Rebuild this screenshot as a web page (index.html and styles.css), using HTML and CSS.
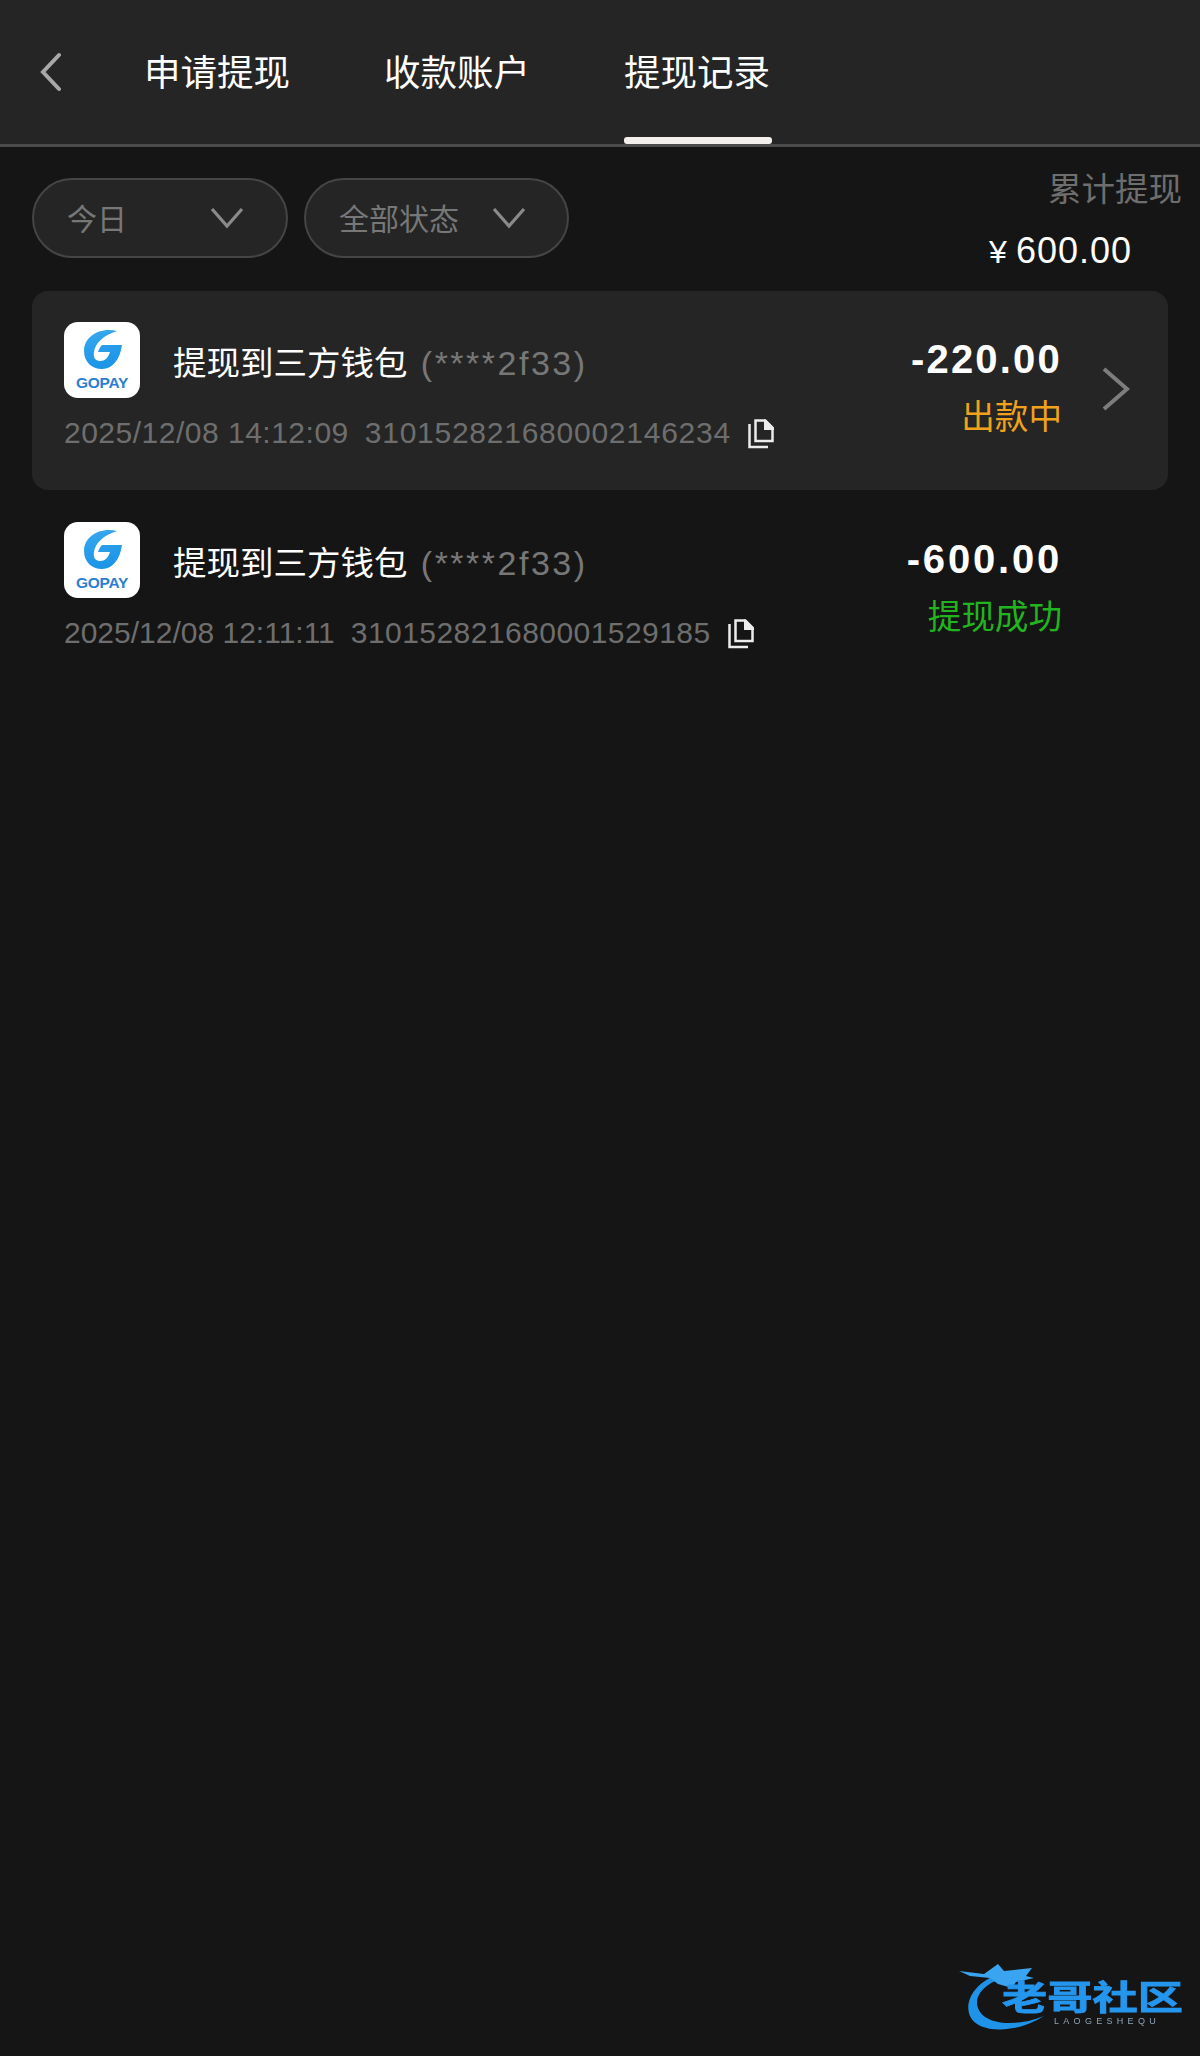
FILE: index.html
```html
<!DOCTYPE html>
<html lang="zh-CN">
<head>
<meta charset="utf-8">
<title>提现记录</title>
<link rel="stylesheet" href="styles.css">
</head>
<body>
<svg class="defs" width="0" height="0" aria-hidden="true">
  <defs>
    <linearGradient id="gopay" x1="0" y1="0" x2="0.3" y2="1">
      <stop offset="0" stop-color="#38a9ef"/>
      <stop offset="1" stop-color="#1c95e6"/>
    </linearGradient>
    <symbol id="g-mark" viewBox="0 0 76 76">
      <path fill="url(#gopay)" d="M53 9C35 5 20 15 20 29C20 40 28 47 38 47C49 47 56 37 58 23L38 23C36 25 35 27 34 30L46 30C44 36 41 39 36 39C31 39 29 35 30 30C31 21 40 13 53 9Z"/>
    </symbol>
    <symbol id="copy" viewBox="0 0 26 31">
      <path fill="none" stroke="#ececec" stroke-width="2.500" d="M7.500 2.500H17L24.500 10V23H7.500Z"/>
      <path fill="#ececec" d="M16 1.500H18L26 9.500V12H16Z"/>
      <path fill="none" stroke="#ececec" stroke-width="2.500" d="M1.500 6V29H20"/>
    </symbol>
  </defs>
</svg>
<main class="page">
  <header class="topbar">
    <button class="back" aria-label="返回">
      <svg width="22" height="40" viewBox="0 0 22 40"><path d="M20 3L4 20L20 37" fill="none" stroke="#a8a8a8" stroke-width="4" stroke-linecap="round"/></svg>
    </button>
    <nav class="tabs">
      <a class="tab">申请提现</a>
      <a class="tab">收款账户</a>
      <a class="tab tab-active">提现记录</a>
    </nav>
  </header>

  <section class="filters">
    <div class="pills">
      <div class="pill pill-day">
        <span>今日</span>
        <svg width="34" height="22" viewBox="0 0 34 22"><path d="M2 2L17 19L32 2" fill="none" stroke="#8a8a8a" stroke-width="3.200"/></svg>
      </div>
      <div class="pill pill-status">
        <span>全部状态</span>
        <svg width="34" height="22" viewBox="0 0 34 22"><path d="M2 2L17 19L32 2" fill="none" stroke="#8a8a8a" stroke-width="3.200"/></svg>
      </div>
    </div>
    <div class="summary">
      <div class="summary-label">累计提现</div>
      <div class="summary-value"><span class="yen">¥</span>600.00</div>
    </div>
  </section>

  <section class="records">
    <article class="record record-active">
      <div class="record-main">
        <div class="record-head">
          <div class="logo">
            <svg class="logo-g" width="76" height="76"><use href="#g-mark"/></svg>
            <span class="logo-text">GOPAY</span>
          </div>
          <div class="record-title">提现到三方钱包 <span class="mask">(****2f33)</span></div>
        </div>
        <div class="record-meta meta-wide">
          <span class="time">2025/12/08 14:12:09</span>
          <span class="order">310152821680002146234</span>
          <svg class="copy" width="26" height="31"><use href="#copy"/></svg>
        </div>
      </div>
      <div class="record-side">
        <div class="amount">-220.00</div>
        <div class="status status-pending">出款中</div>
      </div>
      <div class="arrow-slot">
        <svg width="30" height="46" viewBox="0 0 30 46"><path d="M3 3L26 23L3 43" fill="none" stroke="#7d7d7d" stroke-width="4"/></svg>
      </div>
    </article>

    <article class="record">
      <div class="record-main">
        <div class="record-head">
          <div class="logo">
            <svg class="logo-g" width="76" height="76"><use href="#g-mark"/></svg>
            <span class="logo-text">GOPAY</span>
          </div>
          <div class="record-title">提现到三方钱包 <span class="mask">(****2f33)</span></div>
        </div>
        <div class="record-meta meta-narrow">
          <span class="time">2025/12/08 12:11:11</span>
          <span class="order">310152821680001529185</span>
          <svg class="copy" width="26" height="31"><use href="#copy"/></svg>
        </div>
      </div>
      <div class="record-side">
        <div class="amount amount-wide">-600.00</div>
        <div class="status status-success">提现成功</div>
      </div>
      <div class="arrow-slot"></div>
    </article>
  </section>

  <div class="watermark">
    <svg class="wm-dragon" width="110" height="80" viewBox="0 0 110 80">
      <path d="M40 17C18 26 8 44 14 58C22 76 60 76 88 58C64 68 34 68 24 54C16 42 24 28 46 20Z" fill="#1f93e8"/>
      <path d="M3 13L28 16L42 6L48 13L76 10L70 18L78 20L60 24L56 30L42 26L34 20L14 18Z" fill="#3aa4f0"/>
    </svg>
    <span class="wm-title">老哥社区</span>
    <span class="wm-sub">LAOGESHEQU</span>
  </div>
</main>
</body>
</html>
```

FILE: styles.css
```css
* {
  box-sizing: border-box;
}

html,
body {
  margin: 0;
  padding: 0;
  background: #151515;
}

body {
  font-family: "Liberation Sans", "Noto Sans CJK SC", sans-serif;
  color: #fff;
}

.defs {
  display: block;
  height: 0;
}

.page {
  position: relative;
  width: 1200px;
  height: 2056px;
  background: #151515;
  overflow: hidden;
}

/* Top bar */
.topbar {
  display: flex;
  align-items: flex-start;
  height: 147px;
  background: #252525;
  border-bottom: 3px solid #4a4a4a;
}

.back {
  display: flex;
  width: 144px;
  height: 144px;
  padding: 52px 0 0 39px;
  margin: 0;
  border: 0;
  background: none;
}

.tabs {
  display: flex;
  gap: 92.500px;
}

.tab {
  position: relative;
  display: block;
  width: 147.500px;
  height: 144px;
  padding-top: 48px;
  font-size: 36.500px;
  line-height: 52px;
  color: #fff;
}

.tab-active::after {
  content: "";
  position: absolute;
  left: 0;
  right: 0;
  bottom: 0;
  height: 7px;
  border-radius: 3px;
  background: #f2efec;
}

/* Filters */
.filters {
  display: flex;
  justify-content: space-between;
  height: 144px;
  padding: 19px 18px 0 32px;
}

.pills {
  display: flex;
  gap: 16px;
  padding-top: 12px;
}

.pill {
  display: flex;
  align-items: center;
  justify-content: space-between;
  height: 80px;
  border: 2px solid #454545;
  border-radius: 40px;
  background: #252525;
  font-size: 30px;
  color: #777;
}

.pill span {
  margin-top: -2px;
}

.pill-day {
  width: 256px;
  padding: 0 42px 0 33px;
}

.pill-status {
  width: 265px;
  padding: 0 41px 0 33px;
}

.summary {
  display: flex;
  flex-direction: column;
  align-items: flex-end;
}

.summary-label {
  font-size: 33.500px;
  line-height: 48px;
  color: #6e6e6e;
}

.summary-value {
  margin-top: 13px;
  margin-right: 50px;
  font-size: 36px;
  line-height: 48px;
  letter-spacing: 1px;
  color: #fff;
}

.yen {
  margin-right: 8px;
  font-size: 32px;
}

/* Records */
.records {
  display: flex;
  flex-direction: column;
  gap: 1px;
  margin: 0 32px;
}

.record {
  display: flex;
  height: 199px;
  padding-left: 32px;
  border-radius: 16px;
}

.record-active {
  background: #252525;
}

.record-main {
  flex: 1;
  padding-top: 31px;
}

.record-head {
  display: flex;
  align-items: center;
  height: 76px;
}

.logo {
  position: relative;
  width: 76px;
  height: 76px;
  margin-right: 33px;
  border-radius: 14px;
  background: #fff;
}

.logo-g {
  display: block;
}

.logo-text {
  position: absolute;
  left: 0;
  right: 0;
  top: 49px;
  font-size: 15.500px;
  line-height: 24px;
  font-weight: 700;
  letter-spacing: -0.300px;
  text-align: center;
  color: #2c7fd0;
}

.record-title {
  margin-top: 6px;
  font-size: 33.500px;
  line-height: 48px;
  color: #fff;
  white-space: nowrap;
}

.mask {
  margin-left: 4px;
  color: #777;
  font-size: 34px;
  letter-spacing: 2.500px;
}

.record-meta {
  display: flex;
  align-items: center;
  height: 40px;
  margin-top: 15px;
  font-size: 30px;
  color: #6e6e6e;
  white-space: nowrap;
}

.order {
  margin-left: 16px;
}

.meta-wide .time {
  letter-spacing: 0.500px;
}

.meta-wide .order {
  letter-spacing: 0.750px;
}

.meta-narrow .time {
  letter-spacing: 0;
}

.meta-narrow .order {
  letter-spacing: 0.450px;
}

.copy {
  margin-left: 17px;
}

.record-side {
  display: flex;
  flex-direction: column;
  align-items: flex-end;
  padding-top: 46px;
}

.amount {
  font-size: 40px;
  line-height: 44px;
  font-weight: 700;
  letter-spacing: 2.200px;
}

.amount-wide {
  letter-spacing: 2.800px;
}

.status {
  margin-top: 14px;
  font-size: 33.600px;
  line-height: 46px;
}

.status-pending {
  color: #f0a21c;
}

.status-success {
  color: #22b41e;
}

.arrow-slot {
  display: flex;
  align-items: center;
  justify-content: flex-end;
  width: 106px;
  height: 195px;
  padding-right: 37px;
}

/* Watermark */
.watermark {
  position: absolute;
  left: 956px;
  top: 1958px;
  width: 240px;
  height: 80px;
  filter: blur(0.7px);
}

.wm-dragon {
  position: absolute;
  left: 0;
  top: 0;
}

.wm-title {
  position: absolute;
  left: 46px;
  top: 18px;
  font-size: 34px;
  line-height: 44px;
  font-weight: 700;
  letter-spacing: 0;
  color: #2596ee;
  -webkit-text-stroke: 0.800px #2596ee;
  white-space: nowrap;
  transform: scale(1.330, 1);
  transform-origin: left center;
}

.wm-sub {
  position: absolute;
  left: 98px;
  top: 58px;
  font-size: 9px;
  line-height: 10px;
  letter-spacing: 4.300px;
  color: #8fa4b8;
  white-space: nowrap;
}
```
